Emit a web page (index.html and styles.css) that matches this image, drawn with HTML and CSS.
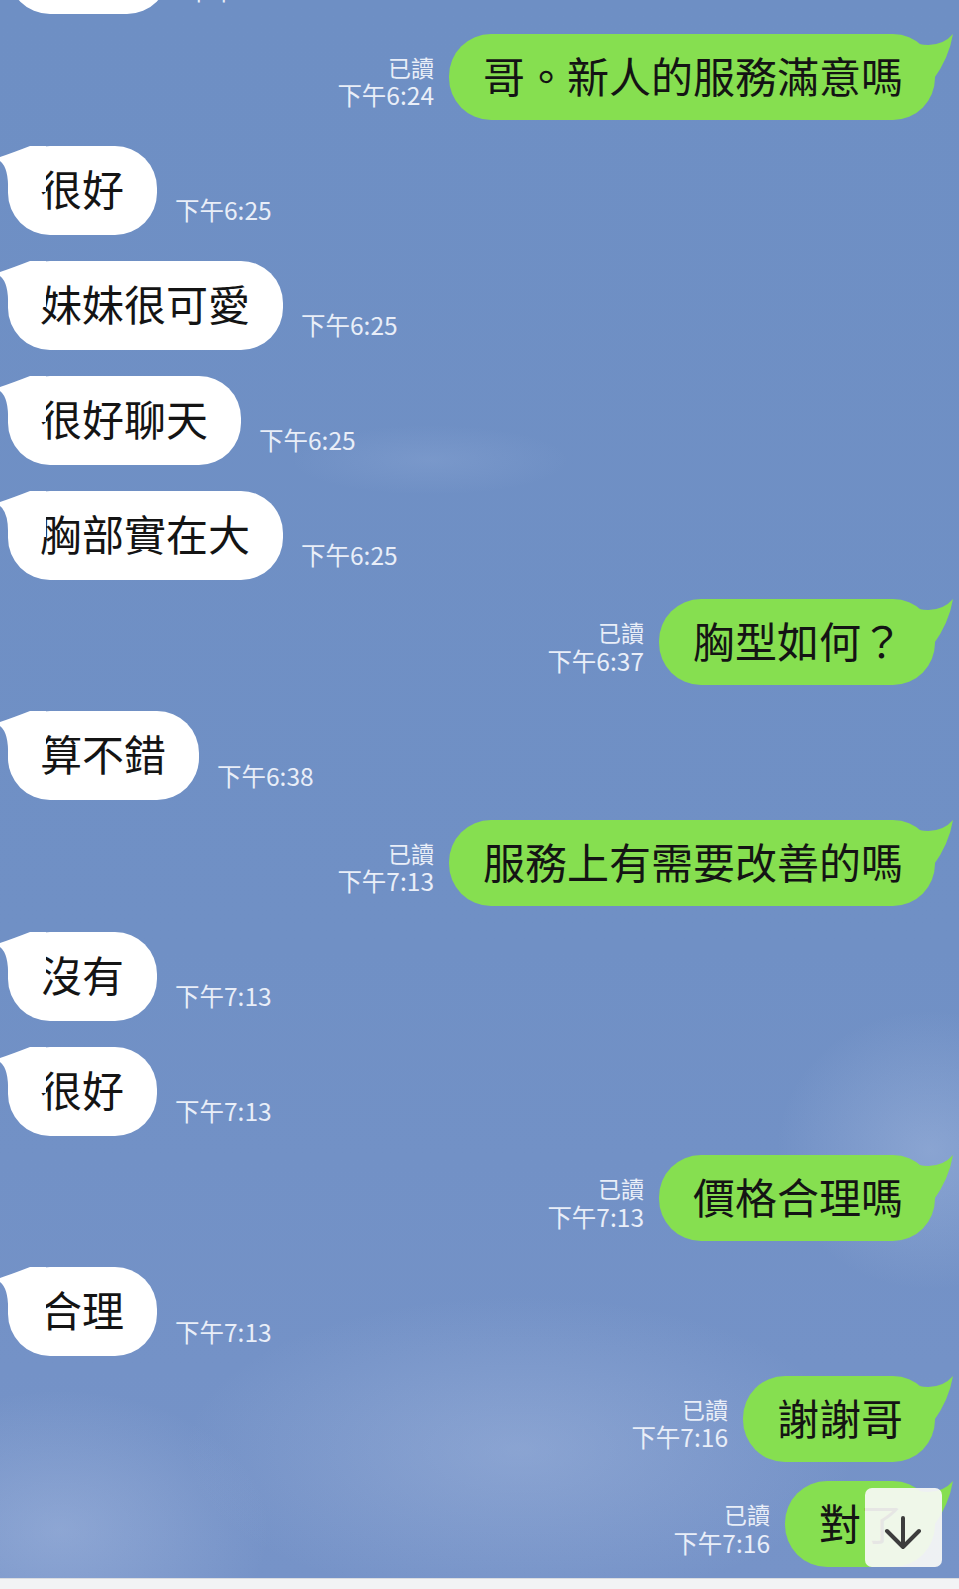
FILE: index.html
```html
<!DOCTYPE html>
<html lang="zh-Hant">
<head>
    <meta charset="UTF-8">
    <meta name="viewport" content="width=device-width, initial-scale=1.0">
    <title>LINE 聊天</title>
    <link rel="stylesheet" href="styles.css">
</head>
<body>
    <div class="chat">
        <div class="row in first">
            <div class="bubble wide">好的</div>
            <div class="meta"><span class="time">下午6:24</span></div>
        </div>

        <div class="row out">
            <div class="meta"><span class="read">已讀</span><span class="time">下午6:24</span></div>
            <div class="bubble">哥。新人的服務滿意嗎</div>
        </div>

        <div class="row in">
            <div class="bubble">很好</div>
            <div class="meta"><span class="time">下午6:25</span></div>
        </div>
        <div class="row in">
            <div class="bubble">妹妹很可愛</div>
            <div class="meta"><span class="time">下午6:25</span></div>
        </div>
        <div class="row in">
            <div class="bubble">很好聊天</div>
            <div class="meta"><span class="time">下午6:25</span></div>
        </div>
        <div class="row in">
            <div class="bubble">胸部實在大</div>
            <div class="meta"><span class="time">下午6:25</span></div>
        </div>

        <div class="row out">
            <div class="meta"><span class="read">已讀</span><span class="time">下午6:37</span></div>
            <div class="bubble">胸型如何？</div>
        </div>

        <div class="row in">
            <div class="bubble">算不錯</div>
            <div class="meta"><span class="time">下午6:38</span></div>
        </div>

        <div class="row out">
            <div class="meta"><span class="read">已讀</span><span class="time">下午7:13</span></div>
            <div class="bubble">服務上有需要改善的嗎</div>
        </div>

        <div class="row in">
            <div class="bubble">沒有</div>
            <div class="meta"><span class="time">下午7:13</span></div>
        </div>
        <div class="row in">
            <div class="bubble">很好</div>
            <div class="meta"><span class="time">下午7:13</span></div>
        </div>

        <div class="row out">
            <div class="meta"><span class="read">已讀</span><span class="time">下午7:13</span></div>
            <div class="bubble">價格合理嗎</div>
        </div>

        <div class="row in">
            <div class="bubble">合理</div>
            <div class="meta"><span class="time">下午7:13</span></div>
        </div>

        <div class="row out">
            <div class="meta"><span class="read">已讀</span><span class="time">下午7:16</span></div>
            <div class="bubble">謝謝哥</div>
        </div>
        <div class="row out">
            <div class="meta"><span class="read">已讀</span><span class="time">下午7:16</span></div>
            <div class="bubble">對了</div>
        </div>

        <!-- jump to latest -->
        <button class="scroll-down" aria-label="scroll down">
            <svg width="77" height="79" viewBox="0 0 77 79">
                <path d="M38 30 L38 59 M22 43 L38 59 L54 43" fill="none" stroke="#3d3d3d" stroke-width="4" stroke-linecap="round" stroke-linejoin="round"/>
            </svg>
        </button>
    </div>
    <div class="bottom-bar"></div>
</body>
</html>
```

FILE: styles.css
```css
body {
    margin: 0;
    font-family: "Noto Sans CJK TC", "Noto Sans CJK SC", sans-serif;
    background: #f2f3f5;
}
.chat {
    position: relative;
    height: 1578px;
    overflow: hidden;
    display: flex;
    flex-direction: column;
    background:
        radial-gradient(ellipse 220px 200px at 930px 1150px, rgba(200, 214, 240, 0.28), transparent 70%),
        radial-gradient(ellipse 480px 220px at 520px 1450px, rgba(188, 204, 234, 0.3), transparent 70%),
        radial-gradient(ellipse 300px 200px at 60px 1530px, rgba(196, 210, 238, 0.3), transparent 70%),
        radial-gradient(ellipse 200px 50px at 430px 460px, rgba(180, 200, 235, 0.15), transparent 70%),
        linear-gradient(180deg, #6e8fc4 0%, #7090c5 60%, #7693c8 100%);
}
.row {
    display: flex;
    align-items: flex-end;
    flex-shrink: 0;
}
.row.in {
    padding-left: 8px;
    margin-top: 26px;
}
.row.out {
    justify-content: flex-end;
    padding-right: 24px;
    margin-top: 19.5px;
}
.row.first {
    margin-top: -75px;
}
.bubble {
    position: relative;
    font-size: 42px;
    line-height: 50px;
    padding: 17px 33px 22px;
    border-radius: 42px;
    color: #141414;
    white-space: nowrap;
}
.bubble.wide {
    width: 96px;
}
.in .bubble {
    background: #fff;
    padding-left: 32px;
}
.out .bubble {
    background: #86df50;
    padding: 16px 32px 20px 34px;
}
.in .bubble::before {
    content: "";
    position: absolute;
    left: -8px;
    top: 0;
    width: 46px;
    height: 46px;
    background: url("data:image/svg+xml,%3Csvg xmlns='http://www.w3.org/2000/svg' width='46' height='46'%3E%3Cpath d='M0 11 Q12 7 30 0 L46 0 L46 46 L8 46 Q9 22 0 15 Z' fill='white'/%3E%3C/svg%3E") no-repeat;
}
.out .bubble::after {
    content: "";
    position: absolute;
    right: -20px;
    top: 0;
    width: 40px;
    height: 46px;
    background: url("data:image/svg+xml,%3Csvg xmlns='http://www.w3.org/2000/svg' width='40' height='46'%3E%3Cpath d='M4 10 Q26 14 38 0 Q34 24 18 46 L0 46 L0 10 Z' fill='%2386df50'/%3E%3C/svg%3E") no-repeat;
}
.meta {
    display: flex;
    flex-direction: column;
    font-size: 24.5px;
    line-height: 27.5px;
    color: #e9eef8;
    padding-bottom: 11px;
    white-space: nowrap;
}
.in .meta {
    margin-left: 18px;
}
.out .meta {
    margin-right: 15px;
    align-items: flex-end;
}
.meta .read {
    font-size: 23px;
}
.scroll-down {
    position: absolute;
    left: 865px;
    top: 1488px;
    width: 77px;
    height: 79px;
    padding: 0;
    border: none;
    border-radius: 7px;
    background: rgba(248, 249, 246, 0.92);
    display: flex;
    align-items: center;
    justify-content: center;
}
.bottom-bar {
    height: 10px;
    background: #f2f3f5;
    border-top: 1px solid #d9dce1;
}
```
